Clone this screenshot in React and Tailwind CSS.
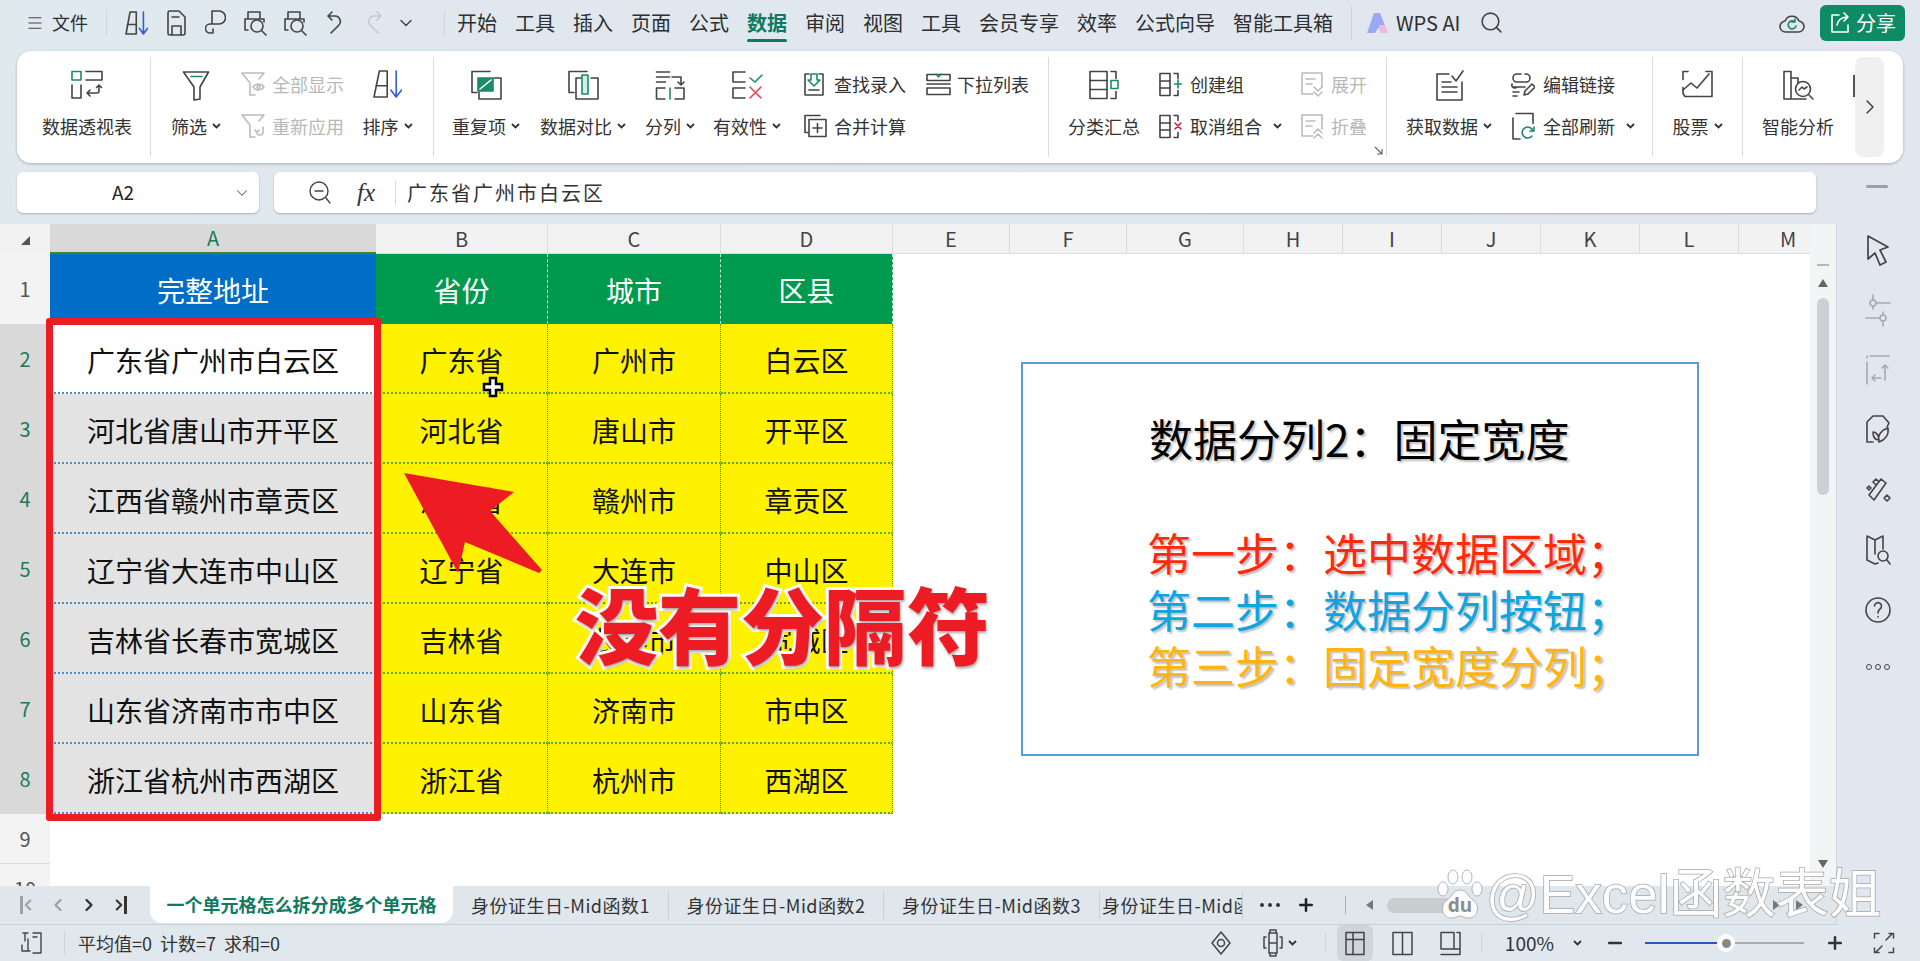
import React from 'react'
import { Search, ChevronDown, ChevronRight, ChevronLeft, Plus, Minus, Menu } from 'lucide-react'

const TEAL = '#1d8a6b'
const BLUE = '#2d5ed6'
const RED = '#e0455a'

function Ic({ w = 30, h = 30, stroke = '#444', sw = 1.6, children, className = '' }) {
  return (
    <svg width={w} height={h} viewBox={`0 0 ${w} ${h}`} fill="none" stroke={stroke} strokeWidth={sw} strokeLinecap="round" strokeLinejoin="round" className={className}>
      {children}
    </svg>
  )
}

function Chev() {
  return (
    <svg width="9" height="6" viewBox="0 0 9 6" fill="none" stroke="#333" strokeWidth="1.8" className="ml-[5px] shrink-0">
      <path d="M1 1l3.5 3.5L8 1" />
    </svg>
  )
}

/* ribbon icons */
const Pivot = () => (
  <Ic w={32} h={30}>
    <rect x="1" y="1.5" width="9" height="8.5" stroke={TEAL} />
    <path d="M15 1.5h16v8.5H15M1 15v13h9V15" />
    <path d="M28 15v6a2 2 0 0 1-2 2H16M25.5 17.5L28 15l2.5 2.5M19 20l-3 3 3 3" />
  </Ic>
)
const Funnel = () => (
  <Ic w={28} h={31}>
    <path d="M1.5 2h25L18 17v12l-6 1V17z" />
    <path d="M9 6.5h11" stroke={TEAL} sw="2" />
  </Ic>
)
const FunnelEye = () => (
  <Ic w={24} h={26} stroke="#bcbcbc">
    <path d="M1 2h22l-5 6M1 2l8 10v12h5" />
    <path d="M12 16c3-4 8-4 11 0-3 4-8 4-11 0z" />
    <circle cx="17.5" cy="16" r="1.5" />
  </Ic>
)
const FunnelBack = () => (
  <Ic w={24} h={26} stroke="#bcbcbc">
    <path d="M1 2h22l-5 6M1 2l8 10v12h5" />
    <path d="M22 14v5a3 3 0 0 1-6 0M14 17l2 2.5 2-2.5" />
  </Ic>
)
const SortIc = ({ w = 29, h = 28, sw = 1.6 }) => (
  <Ic w={w} h={h} sw={sw} className="shrink-0">
    <path d={`M${w * 0.22} 1h${w * 0.27}v${h - 2}H1zM${w * 0.1} ${h * 0.56}h${w * 0.38}`} />
    <path d={`M${w * 0.8} 1v${h - 2}M${w * 0.62} ${h * 0.72}L${w * 0.8} ${h - 1}L${w * 0.98} ${h * 0.72}`} stroke={BLUE} />
  </Ic>
)
const Dup = () => (
  <Ic w={32} h={30}>
    <path d="M20 1.5H2v21h5" />
    <path d="M24 8h7v21H9v-7" />
    <rect x="8" y="8" width="15" height="13" fill={TEAL} stroke={TEAL} />
    <path d="M10 19l11-9" stroke="#fff" sw="2.5" />
  </Ic>
)
const Compare = () => (
  <Ic w={32} h={30}>
    <path d="M20 1.5H2v21h5" />
    <path d="M24 8h7v21H9V8h6" />
    <rect x="15" y="5" width="6" height="19" stroke={TEAL} fill="#d5ede5" />
  </Ic>
)
const Split = () => (
  <Ic w={30} h={30}>
    <path d="M1.5 2h13M1.5 7h13M1.5 12h9M17 7h9v8M23 12l3 3 3-3" />
    <path d="M10 18H1.5v11H10M20 18h9v11h-9" />
    <path d="M15 18v11" stroke={TEAL} sw="2" />
  </Ic>
)
const Valid = () => (
  <Ic w={32} h={30}>
    <path d="M14 2H2v10h12M14 18H2v10h12" />
    <path d="M19 8l5 4 7-7" stroke={TEAL} />
    <path d="M19 17l11 11M30 17L19 28" stroke={RED} />
  </Ic>
)
const FindEntry = () => (
  <Ic w={22} h={24}>
    <path d="M6 2H2v21h18V2h-4" />
    <path d="M8 2h6v6h3l-6 6-6-6h3z" stroke={TEAL} />
    <path d="M6 18h10" />
  </Ic>
)
const Merge = () => (
  <Ic w={24} h={24}>
    <path d="M17 1.5H2v17h3" />
    <rect x="6" y="5.5" width="17" height="17" />
    <path d="M14.5 9.5v9M10 14h9" />
  </Ic>
)
const DropList = () => (
  <Ic w={25} h={23}>
    <path d="M1 1.5h23v6H1zM1 15h23v6.5H1z" />
    <path d="M1 11h23" />
    <path d="M10 1l2.5 3L15 1" stroke={TEAL} />
  </Ic>
)
const Subtotal = () => (
  <Ic w={31} h={30}>
    <rect x="1" y="1.5" width="17" height="27" />
    <path d="M1 10.5h17M1 19.5h17M22 1.5h5v7M27 21.5v7h-5" />
    <rect x="22" y="10.5" width="7" height="8" stroke={TEAL} />
  </Ic>
)
const Group = ({ x }) => (
  <Ic w={24} h={25}>
    <rect x="1" y="1.5" width="10" height="22" />
    <path d="M1 9h10M1 16h10M15 1.5h4v5M19 18.5v5h-4" />
    {x ? <path d="M16 9l6 6M22 9l-6 6" stroke="#d21f3c" /> : <path d="M19 8v8M15.5 12h7" stroke={TEAL} />}
  </Ic>
)
const Outline = ({ up }) => (
  <Ic w={24} h={26} stroke="#bcbcbc">
    <path d="M13 23H2V2h20v14" />
    <path d="M6 8h9M6 13h6" />
    {up ? <path d="M14 20l4-4 4 4M14 25l4-4 4 4" /> : <path d="M14 16l4 4 4-4M14 21l4 4 4-4" />}
  </Ic>
)
const GetData = () => (
  <Ic w={29} h={31}>
    <path d="M14 4H2v26h25V12" />
    <path d="M7 12h9M7 17h15M7 22h15" />
    <path d="M17 6l4 5 7-10" />
  </Ic>
)
const EditLink = () => (
  <Ic w={24} h={25}>
    <path d="M10 2H6a4 4 0 0 0 0 8h9a4 4 0 0 0 0-8h-1" />
    <path d="M14 15H6a3 3 0 0 1-5-3M2 15h9M2 20h6M2 24h4" />
    <path d="M13 23l1-4 7-7 3 3-7 7z" />
  </Ic>
)
const RefreshAll = () => (
  <Ic w={24} h={29}>
    <path d="M5 1.5h17v10M2 6v21h7" />
    <path d="M22 19a5.5 5.5 0 1 0-1 5" stroke={TEAL} sw="2" />
    <path d="M23 15v4h-4" stroke={TEAL} sw="2" />
  </Ic>
)
const Stock = () => (
  <Ic w={31} h={28}>
    <path d="M6 1.5H1v8M24 1.5h6v25H3l-2-3v-6" />
    <path d="M1 20l8-7 6 5L27 4" />
  </Ic>
)
const Analysis = () => (
  <Ic w={32} h={31}>
    <path d="M2 29V1.5h7V29M9 8h7v5M2 29h22" />
    <circle cx="21" cy="19" r="7.5" />
    <path d="M17 20l3-3 2 2 3-2M27 25l4 4" />
  </Ic>
)

function Big({ w, icon, label, menu = true }) {
  return (
    <div className={`${w} flex shrink-0 flex-col items-center`}>
      <div className="flex h-[44px] items-start justify-center pt-[13px]">{icon}</div>
      <div className="mt-[13px] flex h-[24px] items-center text-[18px] leading-[24px] text-[#333]">
        {label}
        {menu && <Chev />}
      </div>
    </div>
  )
}

function Small({ icon, label, menu, gray, iw = 'w-[30px]' }) {
  return (
    <div className={`flex h-[28px] items-center text-[18px] leading-[24px] ${gray ? 'text-[#b8b8b8]' : 'text-[#333]'}`}>
      <div className={`${iw} mr-[1px] flex shrink-0 justify-start`}>{icon}</div>
      {label}
      {menu && <span className="ml-[6px]"><Chev /></span>}
    </div>
  )
}

function Col({ w, children }) {
  return <div className={`${w} flex shrink-0 flex-col gap-[14px] pt-[13px]`}>{children}</div>
}

const Sep = () => <div className="w-px shrink-0 bg-[#dcdcdc]" />

const menus = ['开始', '工具', '插入', '页面', '公式', '数据', '审阅', '视图', '工具', '会员专享', '效率', '公式向导', '智能工具箱']

function TitleBar() {
  return (
    <div className="flex h-[51px] shrink-0 items-center pb-[6px] pl-[26px] pr-[15px] text-[20px] text-[#2f2f2f]">
      <Menu size={18} strokeWidth={1.6} className="mr-[8px] text-[#444]" />
      <span className="text-[18px]">文件</span>
      <div className="mx-[18px] h-[26px] w-px bg-[#cfd6da]" />
      <SortIc w={23} h={24} />
      <Ic w={21} h={26} className="ml-[18px]">
        <path d="M2 3a2 2 0 0 1 2-2h9l6 6v16a2 2 0 0 1-2 2H4a2 2 0 0 1-2-2z" />
        <path d="M6 7h7M6 25v-9h9v9" />
      </Ic>
      <Ic w={21} h={26} className="ml-[18px]">
        <path d="M7 14h7a6.5 6.5 0 0 0 0-13H7v13zM12 14H5a4 4 0 0 0 0 9h3v-4" />
      </Ic>
      <Ic w={24} h={26} className="ml-[17px]">
        <path d="M5 9V2h12v7M5 20H2V9h19v3M12 9h-2" />
        <circle cx="14" cy="16" r="6" />
        <path d="M19 21l4 4" />
      </Ic>
      <Ic w={24} h={26} className="ml-[16px]">
        <path d="M5 9V2h12v7M5 20H2V9h19v3M12 9h-2" />
        <circle cx="14" cy="16" r="6" />
        <path d="M19 21l4 4" />
      </Ic>
      <Ic w={16} h={24} className="ml-[19px]">
        <path d="M6 1L2 5l4 4M2 5h7a5.5 5.5 0 0 1 3 10l-7 7" />
      </Ic>
      <Ic w={16} h={24} stroke="#c4c8cb" className="ml-[25px]">
        <path d="M10 1l4 4-4 4M14 5H7a5.5 5.5 0 0 0-3 10l7 7" />
      </Ic>
      <ChevronDown size={20} strokeWidth={1.8} className="ml-[13px] text-[#444]" />
      <div className="ml-[28px] mr-[12px] h-[26px] w-px bg-[#cfd6da]" />
      <div className="flex items-center gap-[18px]">
        {menus.map((m, i) =>
          m === '数据' ? (
            <span key={i} className="relative font-bold text-[#0e7a5f]">
              {m}
              <span className="absolute bottom-[-4px] left-0 h-[3px] w-full rounded-full bg-[#0e7a5f]" />
            </span>
          ) : (
            <span key={i}>{m}</span>
          )
        )}
      </div>
      <div className="ml-[18px] mr-[13px] h-[34px] w-px bg-[#cfd6da]" />
      <svg width="24" height="24" viewBox="0 0 24 24" className="shrink-0">
        <path d="M9 2h6l8 20h-7l-2-6-4 6H2z" fill="#9aa8f5" />
        <path d="M14 14l2 8h7l-3-8z" fill="#f5b8d8" />
      </svg>
      <span className="ml-[7px] text-[20px]">WPS AI</span>
      <Search size={25} strokeWidth={1.5} className="ml-[19px] text-[#444]" />
      <div className="flex-1" />
      <Ic w={26} h={26} className="mr-[15px]">
        <path d="M7 22a5.5 5.5 0 0 1-1-11 7.5 7.5 0 0 1 14 0 5.5 5.5 0 0 1-1 11z" />
        <path d="M16 12a4 4 0 1 0 1 4M16 9v3h-3" stroke={TEAL} />
      </Ic>
      <div className="flex h-[36px] w-[85px] items-center justify-center gap-[5px] rounded-md bg-[#0e8a64] text-white">
        <Ic w={22} h={22} stroke="#fff">
          <path d="M10 3H3v17h16v-7M8 13c1-5 5-8 11-8M15 1l4 4-4 4" />
        </Ic>
        <span>分享</span>
      </div>
    </div>
  )
}

function Ribbon() {
  return (
    <div className="relative mx-[17px] flex h-[112px] shrink-0 rounded-[14px] bg-white py-[6px] pl-[7px] shadow-[0_1px_3px_rgba(0,0,0,0.25)]">
      <Big w="w-[126px]" icon={<Pivot />} label="数据透视表" menu={false} />
      <Sep />
      <Big w="w-[90px]" icon={<Funnel />} label="筛选" />
      <Col w="w-[111px]">
        <Small icon={<FunnelEye />} label="全部显示" gray />
        <Small icon={<FunnelBack />} label="重新应用" gray />
      </Col>
      <Big w="w-[81px] pr-[10px]" icon={<SortIc />} label="排序" />
      <Sep />
      <Big w="w-[104px]" icon={<Dup />} label="重复项" />
      <Big w="w-[90px]" icon={<Compare />} label="数据对比" />
      <Big w="w-[84px]" icon={<Split />} label="分列" />
      <Big w="w-[70px]" icon={<Valid />} label="有效性" />
      <div className="w-[21px] shrink-0" />
      <Col w="w-[123px]">
        <Small icon={<FindEntry />} label="查找录入" />
        <Small icon={<Merge />} label="合并计算" />
      </Col>
      <Col w="w-[122px]">
        <Small icon={<DropList />} label="下拉列表" />
      </Col>
      <Sep />
      <Big w="w-[110px]" icon={<Subtotal />} label="分类汇总" menu={false} />
      <Col w="w-[141px]">
        <Small icon={<Group />} label="创建组" />
        <Small icon={<Group x />} label="取消组合" menu />
      </Col>
      <Col w="w-[86px]">
        <Small icon={<Outline />} label="展开" gray />
        <Small icon={<Outline up />} label="折叠" gray />
      </Col>
      <div className="relative w-px shrink-0 bg-[#dcdcdc]">
        <svg width="9" height="9" viewBox="0 0 9 9" fill="none" stroke="#666" strokeWidth="1.2" className="absolute bottom-[2px] right-[4px]">
          <path d="M1 1l7 7M3 8h5V3" />
        </svg>
      </div>
      <Big w="w-[124px]" icon={<GetData />} label="获取数据" />
      <Col w="w-[141px]">
        <Small icon={<EditLink />} label="编辑链接" iw="w-[31px]" />
        <Small icon={<RefreshAll />} label="全部刷新" menu iw="w-[31px]" />
      </Col>
      <Sep />
      <Big w="w-[89px]" icon={<Stock />} label="股票" />
      <Sep />
      <Big w="w-[110px]" icon={<Analysis />} label="智能分析" menu={false} />
      <div className="mt-[18px] h-[22px] w-[2px] shrink-0 bg-[#555]" />
      <div className="flex w-[29px] shrink-0 items-center justify-center rounded-lg bg-[#f0f0f0]">
        <ChevronRight size={24} strokeWidth={1.5} className="text-[#444]" />
      </div>
    </div>
  )
}

function FormulaRow() {
  return (
    <div className="mt-[9px] flex h-[41px] shrink-0 pl-[17px]">
      <div className="flex w-[242px] items-center rounded-md bg-white shadow-[0_1px_2px_rgba(0,0,0,0.25)]">
        <span className="flex-1 pr-[4px] text-center text-[19px] text-[#222]">A2</span>
        <ChevronDown size={18} strokeWidth={1.4} className="mr-[8px] text-[#666]" />
      </div>
      <div className="ml-[15px] flex w-[1542px] items-center rounded-md bg-white shadow-[0_1px_2px_rgba(0,0,0,0.25)]">
        <Ic w={24} h={25} sw={1.4} className="ml-[34px]">
          <circle cx="11" cy="11" r="9" />
          <path d="M7 11h8M18 18l4 5" />
        </Ic>
        <span className="ml-[25px] text-[25px] italic text-[#333] [font-family:'Liberation_Serif',serif]">fx</span>
        <div className="ml-[20px] h-[24px] w-px bg-[#d8d8d8]" />
        <span className="ml-[11px] text-[20px] tracking-[2px] text-[#333]">广东省广州市白云区</span>
      </div>
      <div className="ml-[50px] mt-[13px] h-[3px] w-[22px] rounded bg-[#9aa0a6]" />
    </div>
  )
}

const rows = [
  ['广东省广州市白云区', '广东省', '广州市', '白云区'],
  ['河北省唐山市开平区', '河北省', '唐山市', '开平区'],
  ['江西省赣州市章贡区', '江西省', '赣州市', '章贡区'],
  ['辽宁省大连市中山区', '辽宁省', '大连市', '中山区'],
  ['吉林省长春市宽城区', '吉林省', '长春市', '宽城区'],
  ['山东省济南市市中区', '山东省', '济南市', '市中区'],
  ['浙江省杭州市西湖区', '浙江省', '杭州市', '西湖区'],
]
const letters = ['B', 'C', 'D', 'E', 'F', 'G', 'H', 'I', 'J', 'K', 'L', 'M']

function Grid() {
  return (
    <div className="grid w-[1810px] grid-cols-[50px_326px_172px_173px_172px_117px_117px_117px_99px_99px_99px_99px_99px_99px] grid-rows-[30px_70px_70px_70px_70px_70px_70px_70px_70px_50px_50px] overflow-hidden bg-white">
      <div className="flex items-center justify-center bg-[#f2f2f2] pl-[1px]">
        <span className="mt-[2px] border-b-[9px] border-l-[9px] border-b-[#555] border-l-transparent" />
      </div>
      <div className="flex items-center justify-center border-b-2 border-[#3f8a1f] bg-[#d9d9d9] text-[20px] text-[#1b7a5a]">A</div>
      {letters.map((l) => (
        <div key={l} className="flex items-center justify-center border-b border-r border-[#dcdcdc] bg-[#f2f2f2] text-[20px] text-[#444]">{l}</div>
      ))}

      <div className="flex items-center justify-center bg-[#f3f3f3] text-[20px] text-[#555]">1</div>
      <div className="flex items-center justify-center bg-[#006dc6] pt-[2px] text-[28px] text-white">完整地址</div>
      {['省份', '城市', '区县'].map((h) => (
        <div key={h} className="flex items-center justify-center border-r border-dashed border-[#bfe8cf] bg-[#009a4e] pt-[2px] text-[28px] text-white">{h}</div>
      ))}
      <div className="col-span-9" />

      {rows.map((r, i) => (
        <React.Fragment key={r[0]}>
          <div className="flex items-center justify-center bg-[#d9d9d9] text-[20px] text-[#1b7a5a]">{i + 2}</div>
          <div className={`flex items-center justify-center border-b-2 border-dotted border-[#4f8fc4] pt-[3px] text-[28px] text-[#111] ${i === 0 ? 'bg-white' : 'bg-[#e3e3e3]'}`}>{r[0]}</div>
          {r.slice(1).map((c) => (
            <div key={c} className="flex items-center justify-center border-b-2 border-r border-b-[#5fa82c] border-r-[#2c9e45] border-dotted bg-[#fff200] pt-[3px] text-[28px] text-[#111]">{c}</div>
          ))}
          <div className="col-span-9" />
        </React.Fragment>
      ))}

      <div className="flex items-center justify-center border-b border-[#dcdcdc] bg-[#f3f3f3] text-[20px] text-[#555]">9</div>
      <div className="col-span-13" />
      <div className="flex items-center justify-center bg-[#f3f3f3] text-[20px] text-[#555]">10</div>
      <div className="col-span-13" />
    </div>
  )
}

function VScroll() {
  return (
    <div className="flex w-[26px] shrink-0 flex-col items-center bg-[#f3f4f5] pt-[40px]">
      <div className="h-[2px] w-[12px] bg-[#b5b8bb]" />
      <div className="mt-[13px] border-x-[5px] border-b-[8px] border-x-transparent border-b-[#666]" />
      <div className="mt-[11px] h-[197px] w-[12px] rounded-full bg-[#ccd0d4]" />
      <div className="mt-[365px] border-x-[5px] border-t-[8px] border-x-transparent border-t-[#666]" />
    </div>
  )
}

const sheets = [
  ['w-[216px]', '身份证生日-Mid函数1'],
  ['w-[215px]', '身份证生日-Mid函数2'],
  ['w-[216px]', '身份证生日-Mid函数3'],
]

function Tabs() {
  return (
    <div className="flex h-[39px] shrink-0 items-start border-b border-[#c9d0d5] bg-[#dfe7ec] text-[18px] text-[#333]">
      <div className="flex h-[38px] w-[150px] items-center gap-[11px] pl-[20px]">
        <span className="flex items-center text-[#9aa3a8]"><span className="h-[18px] w-[3px] bg-[#9aa3a8]" /><ChevronLeft size={18} strokeWidth={2.8} className="-ml-[4px]" /></span>
        <ChevronLeft size={20} strokeWidth={2.8} className="text-[#9aa3a8]" />
        <ChevronRight size={20} strokeWidth={2.8} className="text-[#333]" />
        <span className="flex items-center text-[#333]"><ChevronRight size={18} strokeWidth={2.8} className="-mr-[4px]" /><span className="h-[18px] w-[3px] bg-[#333]" /></span>
      </div>
      <div className="flex h-[37px] w-[303px] items-center justify-center rounded-b-xl bg-white font-bold text-[#0e7a5f]">一个单元格怎么拆分成多个单元格</div>
      {sheets.map(([w, name]) => (
        <div key={name} className={`${w} mt-[5px] flex h-[28px] items-center justify-center whitespace-nowrap border-r border-[#c9d0d5] tracking-[0.5px]`}>{name}</div>
      ))}
      <div className="mt-[5px] flex h-[28px] w-[143px] items-center overflow-hidden whitespace-nowrap border-r border-[#c9d0d5] pl-[2px] tracking-[0.5px]">身份证生日-Mid函数4</div>
      <div className="mt-[3px] flex h-[32px] items-center">
        <div className="ml-[17px] flex gap-[4px]">
          <span className="h-[4px] w-[4px] rounded-full bg-[#333]" />
          <span className="h-[4px] w-[4px] rounded-full bg-[#333]" />
          <span className="h-[4px] w-[4px] rounded-full bg-[#333]" />
        </div>
        <Plus size={20} strokeWidth={3} className="ml-[16px] text-[#222]" />
        <div className="ml-[29px] h-[18px] w-px bg-[#a9b0b5]" />
        <div className="ml-[20px] border-y-[5px] border-r-[7px] border-y-transparent border-r-[#777]" />
        <div className="ml-[14px] h-[15px] w-[80px] rounded-full bg-[#c8cdd0]" />
        <div className="ml-[306px] border-y-[5px] border-l-[7px] border-y-transparent border-l-[#777]" />
        <div className="ml-[16px] border-y-[5px] border-l-[7px] border-y-transparent border-l-[#777]" />
      </div>
    </div>
  )
}

function Sidebar() {
  return (
    <div className="flex w-[84px] shrink-0 flex-col items-center gap-[27px] border-l border-[#cfd5da] pr-[1px] pt-[10px]">
      <Ic w={26} h={33} sw={1.7}>
        <path d="M3 2l20 11-8 3 6 12-6 3-5-12-7 6z" />
      </Ic>
      <Ic w={26} h={33} stroke="#a6abb0">
        <circle cx="8" cy="9" r="3" />
        <circle cx="18" cy="24" r="3" />
        <path d="M8 1v5M11 9h14M18 27v5M1 24h14M8 12v3M18 18v3" />
      </Ic>
      <Ic w={26} h={33} stroke="#a6abb0">
        <path d="M2 2v2M5 2h19M2 8v22M16 24H7M10 21l-3 3 3 3M20 26V11M17 14l3-3 3 3" />
      </Ic>
      <Ic w={26} h={33}>
        <path d="M8 2h10l6 7-2 4M2 8v20h6M2 8l6-6" />
        <path d="M14 28c-2-6 2-12 9-14 1 7-3 12-9 14zM8 18c3 0 6 3 6 8-4 0-6-3-6-8z" />
      </Ic>
      <Ic w={26} h={33}>
        <path d="M4 21L16 5l5 4L9 26zM8 8l3-3 3 3-3 3zM19 24l3-3 3 3-3 3zM2 14l2-2 2 2-2 2z" />
      </Ic>
      <Ic w={26} h={33}>
        <path d="M2 2l8 4 8-4v13M2 2v24l8 4 3-1M10 6v14" />
        <circle cx="18" cy="22" r="5" />
        <path d="M22 26l3 4" />
      </Ic>
      <Ic w={26} h={33}>
        <circle cx="13" cy="16" r="12" />
        <path d="M9.5 12a3.5 3.5 0 1 1 5.5 3c-1.5 1-2 2-2 4M13 22.5v.5" />
      </Ic>
      <div className="mt-[10px] flex gap-[3px]">
        <span className="h-[6px] w-[6px] rounded-full border-[1.5px] border-[#444]" />
        <span className="h-[6px] w-[6px] rounded-full border-[1.5px] border-[#444]" />
        <span className="h-[6px] w-[6px] rounded-full border-[1.5px] border-[#444]" />
      </div>
    </div>
  )
}

function StatusBar() {
  return (
    <div className="flex h-[36px] shrink-0 items-center bg-[#e0e8ee] text-[18px] text-[#333]">
      <div className="flex w-[65px] justify-center border-r border-[#cfd5da]">
        <Ic w={22} h={24} sw={1.4} className="-ml-[2px]">
          <path d="M2 14v6h8M8 8v12M13 2h8v20H13" />
          <path d="M3 2h5M5 2v8M13 6h4" />
        </Ic>
      </div>
      <span className="ml-[13px] whitespace-pre">平均值=0  计数=7  求和=0</span>
      <div className="flex-1" />
      <div className="flex w-[24px] justify-center">
        <Ic w={24} h={26} sw={1.5}>
          <path d="M12 2l9 11-9 11-9-11z" />
          <circle cx="12" cy="13" r="3.5" />
        </Ic>
      </div>
      <div className="ml-[30px] flex w-[20px] justify-center">
        <Ic w={20} h={30} sw={1.5}>
          <path d="M7 5V2h6v3M7 25v3h6v-3M3 9H1v11h2M17 9h2v11h-2M6 5h8v20H6zM6 15h8" />
        </Ic>
      </div>
      <Chev />
      <div className="ml-[28px] h-[20px] w-px bg-[#cfd5da]" />
      <div className="ml-[11px] flex h-full w-[36px] items-center justify-center rounded-md bg-[#cfd5da]">
        <Ic w={20} h={25} sw={1.5}>
          <path d="M1 1.5h18v22H1zM1 8.5h18M8 1.5v22" />
        </Ic>
      </div>
      <div className="ml-[18px] flex w-[24px] justify-center">
        <Ic w={21} h={25} sw={1.5}><path d="M1 1.5h19v22H1zM10.5 1.5v22" /></Ic>
      </div>
      <div className="ml-[24px] flex w-[24px] justify-center">
        <Ic w={21} h={25} sw={1.5}><path d="M1 18h19M1 23.5h19V1.5h-3M1 18V1.5h13v16" /></Ic>
      </div>
      <div className="ml-[18px] h-[20px] w-px bg-[#cfd5da]" />
      <span className="ml-[23px] text-[19px]">100%</span>
      <span className="ml-[14px]"><Chev /></span>
      <Minus size={20} strokeWidth={3} className="ml-[23px] text-[#333]" />
      <div className="relative ml-[20px] h-[2px] w-[159px] bg-[#aaa]">
        <div className="h-full w-[80px] bg-[#2b55c0]" />
        <div className="absolute left-[72px] top-[-8px] flex h-[18px] w-[18px] items-center justify-center rounded-full bg-white">
          <span className="h-[9px] w-[9px] rounded-full bg-[#888]" />
        </div>
      </div>
      <Plus size={20} strokeWidth={3} className="ml-[21px] text-[#333]" />
      <Ic w={22} h={22} sw={1.5} className="ml-[28px] mr-[25px]">
        <path d="M1.5 6V1.5H6M16 1.5h4.5V6M20.5 16v4.5H16M6 20.5H1.5V16M13 8l6-6M9 14l-6 6" />
      </Ic>
    </div>
  )
}

function Overlays() {
  return (
    <>
      {/* red selection frame */}
      <div className="absolute left-[46px] top-[318px] h-[503px] w-[335px] rounded-[3px] border-[7px] border-[#ed1c24]" />

      {/* red arrow */}
      <svg width="150" height="110" viewBox="0 0 150 110" className="absolute left-[400px] top-[470px]">
        <path d="M4 3L114 22 90 41 142 100 139 103 65 72 58 103z" fill="#ed1c24" />
      </svg>

      {/* mouse cursor */}
      <svg width="24" height="24" viewBox="0 0 24 24" className="absolute left-[481px] top-[375px]">
        <path d="M9 3h6v6h6v6h-6v6H9v-6H3V9h6z" fill="#fff" stroke="#000" strokeWidth="2.5" />
      </svg>

      {/* caption */}
      <div className="absolute left-[575px] top-[578px] whitespace-nowrap text-[83px] font-black leading-[89px] text-[#ed1c24] [-webkit-text-stroke:6px_#fff] [paint-order:stroke_fill] [text-shadow:1px_2px_3px_rgba(0,0,0,0.35)]">没有分隔符</div>

      {/* text box */}
      <div className="absolute left-[1021px] top-[362px] h-[394px] w-[678px] border-2 border-[#5b9bd5] bg-white pl-[126px] pt-[46px] [text-shadow:2px_2px_2px_rgba(0,0,0,0.25)]">
        <div className="text-[44px] leading-[56px] text-black">数据分列2：固定宽度</div>
        <div className="-ml-[2px] mt-[58px] text-[44px] leading-[56.5px]">
          <div className="text-[#ff2a0c]">第一步：选中数据区域；</div>
          <div className="text-[#0ea5e0]">第二步：数据分列按钮；</div>
          <div className="text-[#ffb50f]">第三步：固定宽度分列；</div>
        </div>
      </div>

      {/* watermark */}
      <div className="absolute left-[1437px] top-[868px] flex items-center opacity-95">
        <svg width="46" height="54" viewBox="0 0 46 54">
          <g fill="#fff" stroke="#a0a0a0" strokeWidth="0.8">
            <ellipse cx="6" cy="21" rx="5" ry="7" />
            <ellipse cx="16" cy="9" rx="5" ry="7" />
            <ellipse cx="30" cy="9" rx="5" ry="7" />
            <ellipse cx="40" cy="21" rx="5" ry="7" />
            <path d="M23 22c7 0 8 7 14 11 7 6 3 18-6 17-4 0-6-2-8-2s-4 2-8 2C6 51 2 39 9 33c6-4 7-11 14-11z" />
          </g>
          <text x="23" y="44" textAnchor="middle" fontSize="19" fontWeight="700" fill="#8a8a8a" fontFamily="'Noto Sans', sans-serif">du</text>
        </svg>
        <span className="ml-[3px] whitespace-nowrap text-[53px] leading-[54px] text-white [-webkit-text-stroke:1.5px_#a3a3a3] [paint-order:stroke_fill] [font-family:'Liberation_Sans','Noto_Sans_CJK_SC',sans-serif]">@Excel函数表姐</span>
      </div>
    </>
  )
}

export default function App() {
  return (
    <div className="relative flex h-[961px] w-[1920px] flex-col overflow-hidden bg-linear-to-r from-[#dfe9ee] to-[#e2e6ef] [font-family:'Noto_Sans_CJK_SC',sans-serif]">
      <TitleBar />
      <Ribbon />
      <FormulaRow />
      <div className="mt-[11px] flex min-h-0 flex-1">
        <div className="flex w-[1836px] shrink-0 flex-col">
          <div className="flex h-[662px] shrink-0 overflow-hidden">
            <Grid />
            <VScroll />
          </div>
          <Tabs />
        </div>
        <Sidebar />
      </div>
      <StatusBar />
      <Overlays />
    </div>
  )
}
